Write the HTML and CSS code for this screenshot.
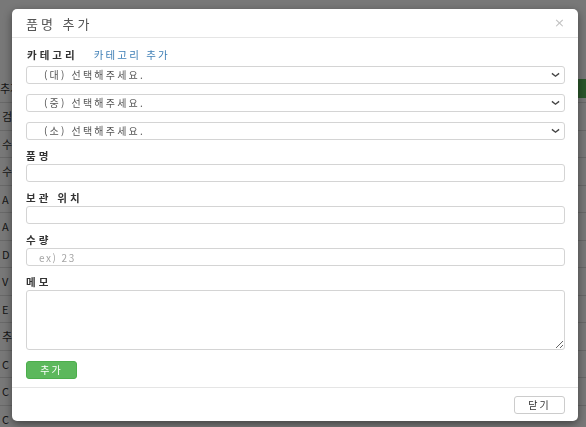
FILE: index.html
```html
<!DOCTYPE html>
<html lang="ko">
<head>
    <meta charset="UTF-8">
    <meta name="viewport" content="width=device-width, initial-scale=1.0">
    <title>품명 추가</title>
    <link rel="stylesheet" href="styles.css">
</head>
<body>
    <!-- page behind the modal -->
    <div class="page">
        <div class="page-toolbar">
            <span class="page-add">추가</span>
            <span class="page-btn"></span>
        </div>
        <div class="page-row">검색</div>
        <div class="page-row">수량</div>
        <div class="page-row">수정</div>
        <div class="page-row">A</div>
        <div class="page-row">A</div>
        <div class="page-row">D</div>
        <div class="page-row">V</div>
        <div class="page-row">E</div>
        <div class="page-row">추</div>
        <div class="page-row">C</div>
        <div class="page-row">C</div>
        <div class="page-row">C</div>
    </div>

    <div class="backdrop"></div>

    <div class="modal">
        <div class="modal-header">
            <h4 class="modal-title">품명 추가</h4>
            <button class="close" type="button">&times;</button>
        </div>

        <div class="modal-body">
            <div class="form-group">
                <div class="label-row">
                    <label>카테고리</label>
                    <a class="link" href="#">카테고리 추가</a>
                </div>
                <div class="select-wrap">
                    <div class="form-control select">(대) 선택해주세요.</div>
                    <svg class="chevron" viewBox="0 0 10 6"><path d="M1 1.2 L5 4.4 L9 1.2"/></svg>
                </div>
                <div class="select-wrap">
                    <div class="form-control select">(중) 선택해주세요.</div>
                    <svg class="chevron" viewBox="0 0 10 6"><path d="M1 1.2 L5 4.4 L9 1.2"/></svg>
                </div>
                <div class="select-wrap">
                    <div class="form-control select">(소) 선택해주세요.</div>
                    <svg class="chevron" viewBox="0 0 10 6"><path d="M1 1.2 L5 4.4 L9 1.2"/></svg>
                </div>
            </div>

            <div class="form-group">
                <label>품명</label>
                <input class="form-control" type="text">
            </div>

            <div class="form-group">
                <label>보관 위치</label>
                <input class="form-control" type="text">
            </div>

            <div class="form-group">
                <label>수량</label>
                <input class="form-control" type="text" placeholder="ex) 23">
            </div>

            <div class="form-group">
                <label>메모</label>
                <textarea class="form-control memo"></textarea>
            </div>

            <button class="btn btn-success" type="button">추가</button>
        </div>

        <div class="modal-footer">
            <button class="btn btn-default" type="button">닫기</button>
        </div>
    </div>
</body>
</html>
```

FILE: styles.css
```css
body {
    margin: 0;
    height: 427px;
    overflow: hidden;
    font-family: "Noto Sans CJK KR", "Noto Sans", sans-serif;
    background-color: #fff;
    color: #333;
}

/* page behind */
.page {
    font-size: 11px;
}
.page-toolbar {
    display: flex;
    justify-content: space-between;
    align-items: center;
    height: 28px;
    margin-top: 74px;
    border-bottom: 1px solid #ddd;
}
.page-btn {
    width: 60px;
    height: 19px;
    background-color: #5cb85c;
}
.page-row {
    height: 26.5px;
    line-height: 26px;
    padding-left: 2px;
    border-bottom: 1px solid #ddd;
}

.backdrop {
    position: fixed;
    top: 0;
    left: 0;
    right: 0;
    bottom: 0;
    background-color: rgba(0, 0, 0, 0.53);
}

/* modal */
.modal {
    position: absolute;
    top: 9px;
    left: 12px;
    width: 566px;
    background-color: #fff;
    border-radius: 5px;
    box-shadow: 0 3px 9px rgba(0, 0, 0, 0.45);
}
.modal-header {
    height: 28px;
    display: flex;
    align-items: center;
    justify-content: space-between;
    padding: 0 13px 0 14px;
    border-bottom: 1px solid #e5e5e5;
}
.modal-title {
    margin: 0;
    font-size: 13px;
    font-weight: normal;
    letter-spacing: 3px;
    color: #555;
}
.close {
    border: none;
    background: none;
    padding: 0;
    font-family: "DejaVu Sans", sans-serif;
    font-size: 13px;
    line-height: 1;
    color: #c2c2c2;
    margin-top: -2px;
}
.modal-body {
    padding: 11px 13px 8px 14px;
    border-bottom: 1px solid #e5e5e5;
}
.form-group {
    margin-bottom: 10px;
}
label {
    display: block;
    height: 12px;
    line-height: 12px;
    margin-bottom: 2px;
    font-size: 10.5px;
    font-weight: bold;
    letter-spacing: 3px;
    color: #333;
}
.label-row {
    display: flex;
    align-items: center;
    height: 12px;
    margin-bottom: 5px;
}
.label-row label {
    margin: 0 16px 0 1px;
}
.link {
    font-size: 10.5px;
    line-height: 12px;
    letter-spacing: 2.2px;
    color: #3f7fb6;
    text-decoration: none;
}
.form-control {
    display: block;
    width: 100%;
    height: 18px;
    box-sizing: border-box;
    margin: 0;
    padding: 0 12px;
    border: 1px solid #d4d4d4;
    border-radius: 3px;
    background-color: #fff;
    font-family: "Noto Sans CJK KR", "Noto Sans", sans-serif;
    font-size: 10px;
    letter-spacing: 1.5px;
    color: #555;
    outline: none;
}
.form-control::placeholder {
    color: #a5a5a5;
}
.select-wrap {
    position: relative;
    margin-bottom: 10px;
}
.select-wrap:last-child {
    margin-bottom: 0;
}
.form-control.select {
    padding-left: 17px;
    line-height: 16px;
    letter-spacing: 2.2px;
}
.chevron {
    position: absolute;
    top: 6px;
    right: 5px;
    width: 9px;
    height: 6px;
    fill: none;
    stroke: #444;
    stroke-width: 1.5;
}
.memo {
    height: 60px;
    padding: 4px 12px;
    resize: vertical;
}
.btn {
    display: block;
    width: 51px;
    height: 18px;
    padding: 0;
    border-radius: 3px;
    font-family: "Noto Sans CJK KR", "Noto Sans", sans-serif;
    font-size: 10px;
    letter-spacing: 2px;
    line-height: 16px;
    text-align: center;
    cursor: pointer;
}
.btn-success {
    margin-top: 11px;
    background-color: #5cb85c;
    border: 1px solid #4cae4c;
    color: #fff;
}
.btn-default {
    background-color: #fff;
    border: 1px solid #ccc;
    color: #333;
}
.modal-footer {
    display: flex;
    justify-content: flex-end;
    padding: 8px 13px 7px 14px;
}
```
